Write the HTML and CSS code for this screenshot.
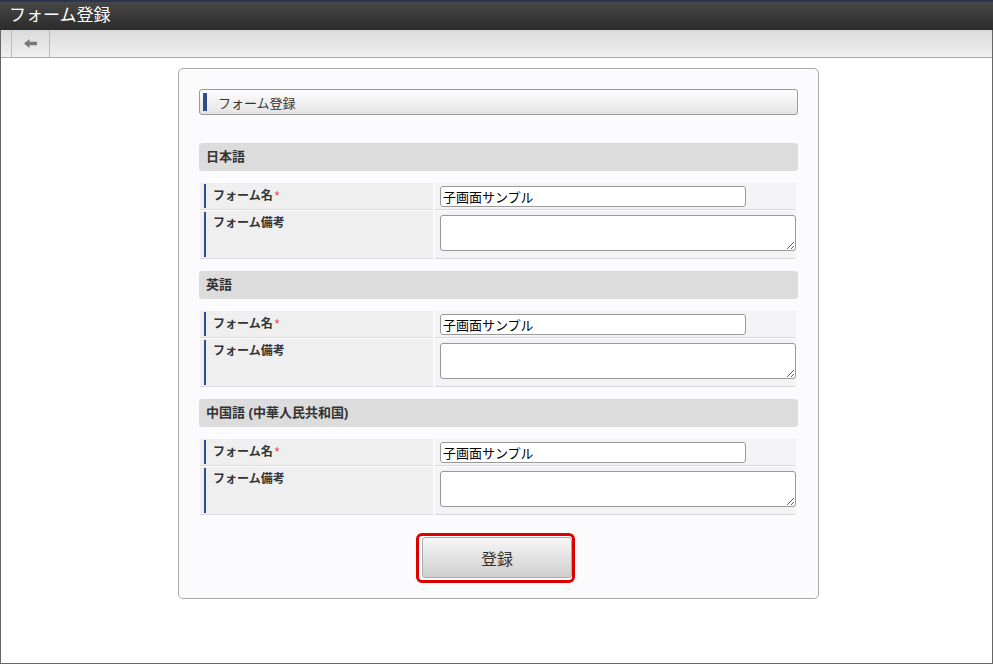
FILE: index.html
```html
<!DOCTYPE html>
<html lang="ja">
<head>
    <meta charset="UTF-8">
    <title>フォーム登録</title>
    <link rel="stylesheet" href="styles.css">
</head>
<body>
    <div class="window">
        <div class="header">フォーム登録</div>
        <div class="toolbar">
            <div class="back">
                <svg width="13" height="9" viewBox="0 0 13 9"><path d="M0 4.5 L5.5 0 L5.5 2.8 L13 2.8 L13 6.2 L5.5 6.2 L5.5 9 Z" fill="#777"/></svg>
            </div>
        </div>
        <div class="main">
            <div class="panel">
                <div class="title"><span class="bar"></span>フォーム登録</div>

                <div class="section">
                    <div class="sec-head">日本語</div>
                    <div class="row">
                        <div class="label">フォーム名<span class="req">*</span></div>
                        <div class="value"><input class="text" type="text" value="子画面サンプル"></div>
                    </div>
                    <div class="row tall">
                        <div class="label">フォーム備考</div>
                        <div class="value"><textarea class="memo"></textarea></div>
                    </div>
                </div>

                <div class="section">
                    <div class="sec-head">英語</div>
                    <div class="row">
                        <div class="label">フォーム名<span class="req">*</span></div>
                        <div class="value"><input class="text" type="text" value="子画面サンプル"></div>
                    </div>
                    <div class="row tall">
                        <div class="label">フォーム備考</div>
                        <div class="value"><textarea class="memo"></textarea></div>
                    </div>
                </div>

                <div class="section">
                    <div class="sec-head">中国語 (中華人民共和国)</div>
                    <div class="row">
                        <div class="label">フォーム名<span class="req">*</span></div>
                        <div class="value"><input class="text" type="text" value="子画面サンプル"></div>
                    </div>
                    <div class="row tall">
                        <div class="label">フォーム備考</div>
                        <div class="value"><textarea class="memo"></textarea></div>
                    </div>
                </div>

                <div class="actions">
                    <div class="mark"><button class="submit">登録</button></div>
                </div>
            </div>
        </div>
    </div>
</body>
</html>
```

FILE: styles.css
```css
body{
    margin: 0;
    font-family: "Liberation Sans", "Noto Sans CJK JP", sans-serif;
    color: #333;
}
.window{
    width: 993px;
    height: 664px;
    box-sizing: border-box;
    border: 1px solid #666;
    border-top: none;
    background-color: #fff;
}
.header{
    height: 28px;
    border-top: 2px solid #2a3552;
    margin: 0 -1px;
    background: linear-gradient(#474747, #2b2b2b);
    color: #fff;
    font-size: 17px;
    line-height: 27px;
    padding-left: 9px;
}
.toolbar{
    height: 27px;
    border-bottom: 1px solid #aaa;
    background: linear-gradient(#dadada, #f0f0f0);
    padding-left: 10px;
}
.back{
    width: 37px;
    height: 27px;
    border-left: 1px solid #bbb;
    border-right: 1px solid #bbb;
    display: flex;
    justify-content: center;
    align-items: center;
}
.main{
    padding-top: 10px;
}
.panel{
    width: 599px;
    margin-left: 177px;
    padding: 20px 20px 15px 20px;
    border: 1px solid #aaa;
    border-radius: 5px;
    background-color: #fbfbfd;
}
.title{
    height: 24px;
    border: 1px solid #999;
    border-radius: 3px;
    background: linear-gradient(#fdfdfd, #e4e4e4);
    display: flex;
    align-items: center;
    font-size: 13px;
}
.title .bar{
    width: 4px;
    height: 18px;
    margin: 0 11px 0 3px;
    background-color: #2e4d8f;
}
.section{
    margin-top: 28px;
}
.section + .section{
    margin-top: 12px;
}
.sec-head{
    height: 28px;
    line-height: 28px;
    padding-left: 7px;
    border-radius: 3px;
    background-color: #dcdcdc;
    font-size: 13px;
    font-weight: bold;
    margin-bottom: 12px;
}
.row{
    display: grid;
    grid-template-columns: 233px 361px;
    column-gap: 2px;
    margin-left: 1px;
    margin-bottom: 1px;
    height: 27px;
}
.row.tall{
    height: 48px;
}
.label{
    background-color: #efefef;
    border-bottom: 1px solid #dadada;
    padding: 0 0 0 13px;
    position: relative;
    font-size: 12px;
    font-weight: bold;
    line-height: 26px;
}
.label::before{
    content: "";
    position: absolute;
    left: 4px;
    top: 1px;
    bottom: 1px;
    width: 2px;
    background-color: #2e4d8f;
}
.tall .label{
    line-height: 25px;
}
.req{
    color: #e33;
    font-weight: normal;
    margin-left: 2px;
}
.value{
    background-color: #f4f4f6;
    border-bottom: 1px solid #dadada;
    padding: 3px 0 0 5px;
}
.text{
    width: 306px;
    height: 21px;
    box-sizing: border-box;
    border: 1px solid #999;
    border-radius: 3px;
    padding: 0 2px;
    font-family: "Noto Sans CJK JP", sans-serif;
    font-size: 13px;
    color: #000;
    background-color: #fff;
}
.memo{
    display: block;
    margin-top: 1px;
    width: 356px;
    height: 36px;
    box-sizing: border-box;
    border: 1px solid #999;
    border-radius: 3px;
    resize: vertical;
    background-color: #fff;
}
.actions{
    margin-top: 18px;
    text-align: center;
}
.mark{
    display: inline-block;
    margin-right: 6px;
    border: 3px solid #dd0000;
    border-radius: 6px;
    padding: 1px 0 2px 3px;
    background-color: #fff;
}
.submit{
    display: block;
    width: 150px;
    height: 41px;
    border: 1px solid #aaa;
    border-radius: 3px;
    background: linear-gradient(#f6f6f6, #cfcfcf);
    font-family: "Liberation Sans", "Noto Sans CJK JP", sans-serif;
    font-size: 16px;
    color: #333;
    cursor: pointer;
}
```
